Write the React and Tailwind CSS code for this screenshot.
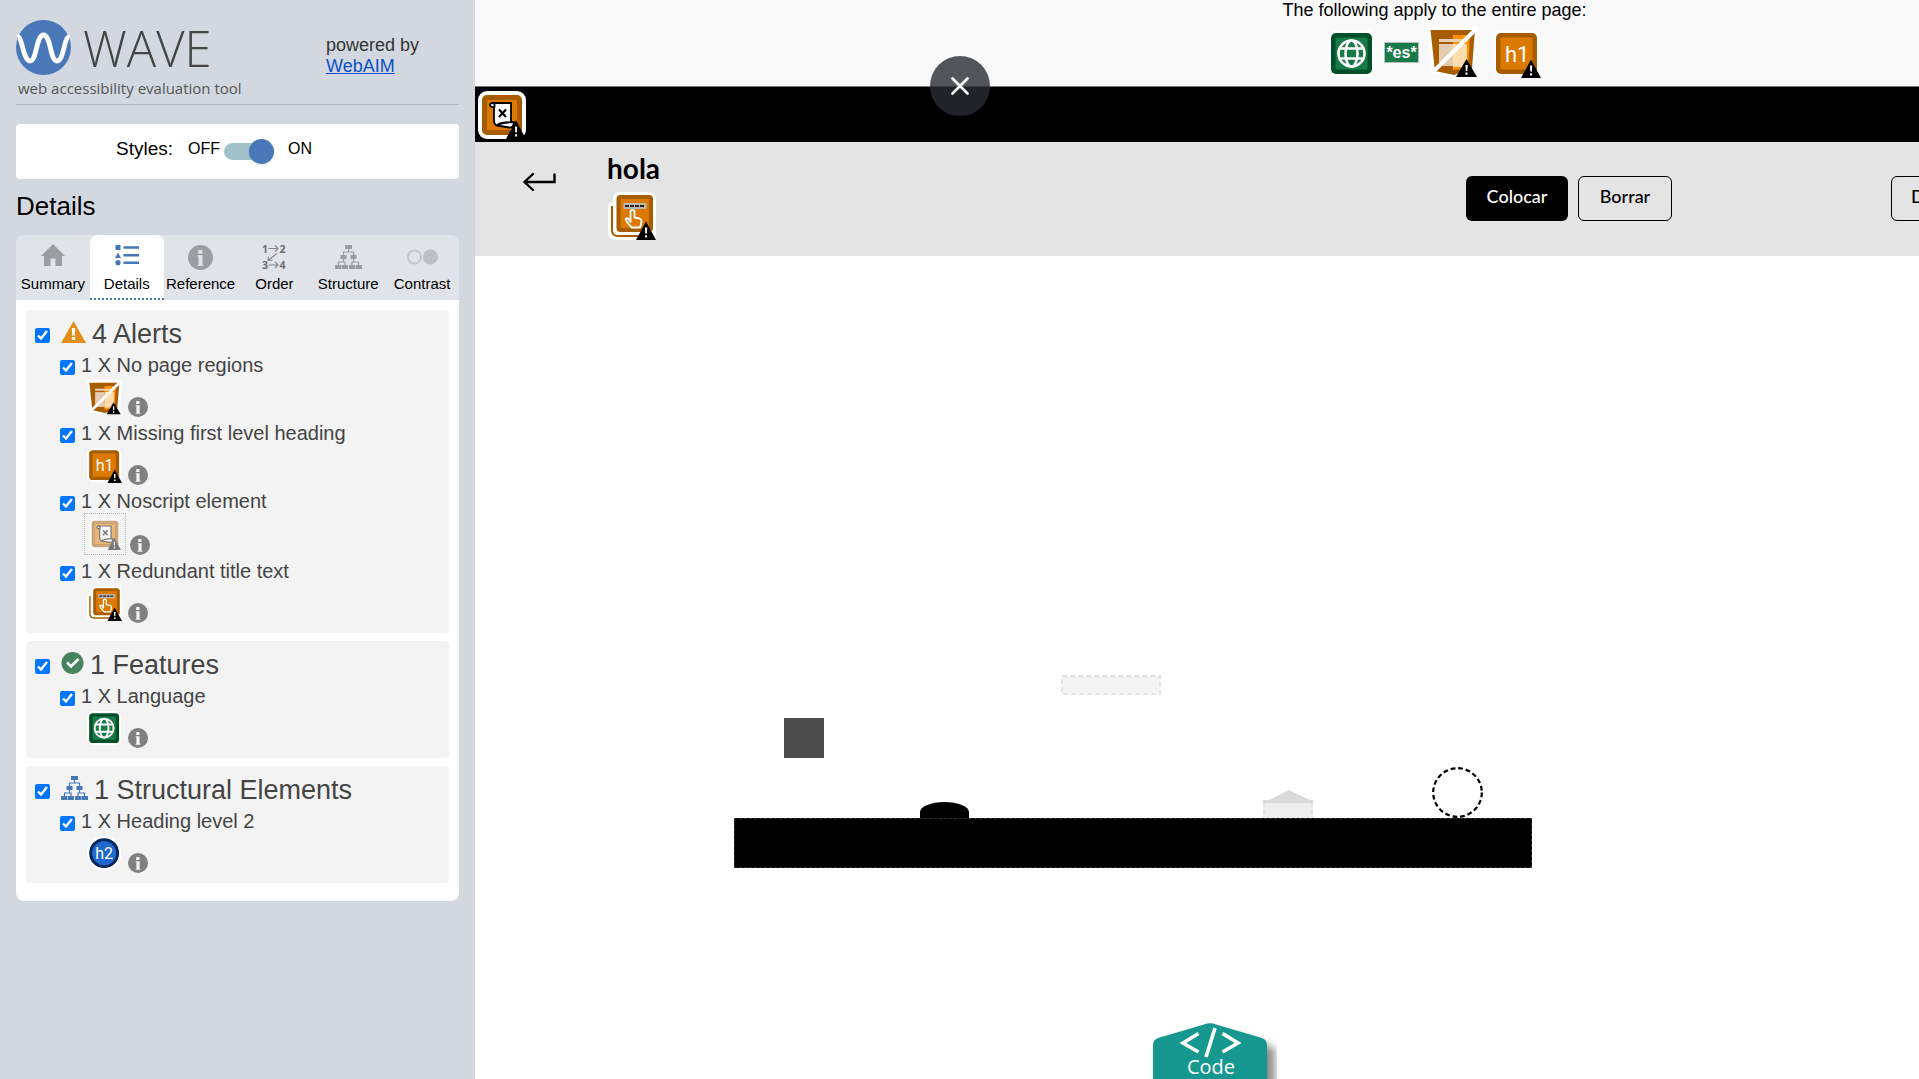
import React from "react";

const ARIAL = "font-['Liberation_Sans',Arial,sans-serif]";

function Warn() {
  return (
    <g>
      <path d="M38 29.500 L48 48 H28 Z" fill="#000" />
      <path d="M37 35.500h2.200l-.3 6h-1.600z M37.100 43.200h2v2.200h-2z" fill="#fff" />
    </g>
  );
}

function Plate({ dark, fill }) {
  return (
    <g>
      <rect width="47" height="47" rx="8" fill="#fff" />
      <rect x="3" y="3" width="41" height="41" rx="5" fill={dark} />
      <rect x="7.500" y="7.500" width="32" height="32" rx="1" fill={fill} />
    </g>
  );
}

function GlobeIcon({ className }) {
  return (
    <svg viewBox="0 0 48 48" className={className} role="img" aria-label="Language">
      <Plate dark="#004f28" fill="#187a48" />
      <g fill="none" stroke="#fff" strokeWidth="2.600">
        <circle cx="23.500" cy="23.500" r="13" />
        <ellipse cx="23.500" cy="23.500" rx="6" ry="13" />
        <path d="M12.500 18.500h22M12.500 28.500h22" />
      </g>
    </svg>
  );
}

function H1Icon({ className }) {
  return (
    <svg viewBox="0 0 48 48" className={className} role="img" aria-label="Missing first level heading">
      <Plate dark="#a75c00" fill="#dc7a00" />
      <text x="12" y="32" fontSize="22" fill="#fff" fontFamily="Roboto, sans-serif">h1</text>
      <Warn />
    </svg>
  );
}

function H2Icon({ className }) {
  return (
    <svg viewBox="0 0 48 48" className={className} role="img" aria-label="Heading level 2">
      <circle cx="23.500" cy="23.500" r="23.500" fill="#fff" />
      <circle cx="23.500" cy="23.500" r="20.500" fill="#00265c" />
      <circle cx="23.500" cy="23.500" r="16.500" fill="#2068cc" />
      <text x="23.500" y="31" fontSize="22" textAnchor="middle" fill="#fff" fontFamily="Roboto, sans-serif">h2</text>
    </svg>
  );
}

function NoRegionIcon({ className }) {
  return (
    <svg viewBox="0 0 52 52" className={className} role="img" aria-label="No page regions">
      <path d="M0 0H52L49 46 27 52 5 48Z" fill="#fff" />
      <path d="M3.500 4H48L45 42 27 49 8 45Z" fill="#a75c00" />
      <path d="M26 9H43L41 43 26 44Z" fill="#ff8f00" />
      <path d="M12 13H40V16H12Z" fill="#e8d0ae" />
      <path d="M12 18H26V40H12Z" fill="#e3ccb0" />
      <path d="M26 18H40V41H26Z" fill="#ffdcb0" />
      <path d="M7 45L48 4" stroke="#fff" strokeWidth="4" />
      <path d="M39.500 33L50 51H29Z" fill="#000" />
      <path d="M38.500 39h2.200l-.3 6h-1.600z M38.500 46.500h2v2.200h-2z" fill="#fff" />
    </svg>
  );
}

function NoscriptIcon({ className }) {
  return (
    <svg viewBox="0 0 48 48" className={className} role="img" aria-label="Noscript element">
      <rect width="48" height="48" rx="9" fill="#fff" />
      <rect x="4" y="4" width="40" height="40" rx="5" fill="#a75c00" />
      <rect x="9" y="9" width="30" height="30" rx="1" fill="#dc7a00" />
      <g stroke="#000" strokeWidth="1.800" strokeLinejoin="round">
        <path d="M14 12H33V31c0 3-2 4.500-2 4.500L18 34c-2-1-2-4-2-4V14c0-1.500-1-2-2-2Z" fill="#fff" />
        <path d="M16.500 16.500V13.500c0-1.800-4.500-2-4.500.2 0 2.500 3 2.800 4.500 1.800" fill="#fff" />
        <path d="M19 34.500c2-2.500 6-3 17-3.500 0 4-2 6-5 5.500Z" fill="#fff" />
        <path d="M21 18.500l7 7.500M28 18.500l-7 7.500" fill="none" strokeWidth="2.200" />
      </g>
      <Warn />
    </svg>
  );
}

function RedundantIcon({ className }) {
  return (
    <svg viewBox="0 0 48 48" className={className} role="img" aria-label="Redundant title text">
      <path d="M12 0H40q8 0 8 7V41q0 7-7 7H8q-8 0-8-7V16q0-6 5-6V7q0-7 7-7Z" fill="#fff" />
      <path d="M4 14V38q0 6 6 6H40" fill="none" stroke="#a75c00" strokeWidth="2" />
      <rect x="8.500" y="3" width="36.500" height="37" rx="4" fill="#a75c00" />
      <rect x="12.500" y="7" width="28.500" height="29" fill="#dc7a00" />
      <rect x="15.500" y="11" width="23" height="6" fill="#bdb6ad" />
      <path d="M17 14H37" stroke="#222" strokeWidth="1.800" strokeDasharray="4 1" />
      <path d="M22.500 30V20q0-2 2-2t2 2V25.500l5 1q2 .5 2 2.500-.3 4-1.500 6.500h-8.500c-2-3-5-5-6-8.500 1.500-1.500 3.500-.5 5 3Z" fill="none" stroke="#fff" strokeWidth="1.800" strokeLinejoin="round" />
      <Warn />
    </svg>
  );
}

function InfoIcon({ className, light }) {
  return (
    <svg viewBox="0 0 20 20" className={className} aria-hidden="true">
      <circle cx="10" cy="10" r="10" fill="currentColor" />
      <g fill={light}>
        <rect x="8.200" y="4" width="3.300" height="3" />
        <path d="M7.600 8.200h4v7.600h.8v.9H7.600v-.9h.8V9.200h-.8z" />
      </g>
    </svg>
  );
}

function TreeIcon({ className }) {
  return (
    <svg viewBox="0 0 27 24" className={className} fill="currentColor" aria-hidden="true">
      <path d="M10 0h7v4h-7zM5.500 10h6v4h-6zM15.500 10h6v4h-6zM0 20h6.500v4H0zM7 20h6v4H7zM14 20h6v4h-6zM20.500 20H27v4h-6.500z" />
      <path d="M13.500 4v3M8.500 10V7h10v3M8.500 14v3M18.500 14v3M3.500 20v-3H10v3M17 20v-3h6.500v3" fill="none" stroke="currentColor" strokeWidth="1.200" />
    </svg>
  );
}

function OrderIcon({ className }) {
  return (
    <svg viewBox="-4 -5 32 36" className={className} aria-hidden="true">
      <g fontFamily="'Open Sans', sans-serif" fontWeight="700" fontSize="10.500" fill="#6c6f72">
        <text x="0" y="8.500">1</text>
        <text x="17.500" y="8.500">2</text>
        <text x="0" y="25">3</text>
        <text x="17.500" y="25">4</text>
      </g>
      <g fill="none" stroke="#84888b" strokeWidth="1.100">
        <path d="M6.500 4.500h9.500M13 1.500l3 3-3 3M6.500 21h9.500M13 18l3 3-3 3M15 9.500L6 16.500M6.500 12.500L6 16.500l4.500-.2" />
      </g>
    </svg>
  );
}

const TABS = [
  {
    name: "Summary",
    icon: (
      <svg viewBox="0 0 24 22" className="mb-1 h-[22px] w-[24px]" aria-hidden="true">
        <path d="M12 0L24 12H21V22H14.500V14.500H9.500V22H3V12H0Z" fill="#9a9ea1" />
      </svg>
    ),
  },
  {
    name: "Details",
    icon: (
      <svg viewBox="0 0 24 22" className="mb-1 h-[22px] w-[24px]" fill="#4678b8" aria-hidden="true">
        <path d="M.5 1h5v5h-5zM3 8.500l3 5.500H0zM8.500 2.200H24v2.500H8.500zM8.500 10H24v2.500H8.500zM8.500 17.500H24V20H8.500z" />
        <circle cx="3" cy="18.700" r="2.600" />
      </svg>
    ),
  },
  { name: "Reference", icon: <InfoIcon className="size-[25px] text-[#9a9ea1]" light="#e0e3e8" /> },
  { name: "Order", icon: <OrderIcon className="h-[36px] w-[32px]" /> },
  { name: "Structure", icon: <TreeIcon className="h-[24px] w-[27px] text-[#9a9ea1]" /> },
  {
    name: "Contrast",
    icon: (
      <svg viewBox="0 0 31 16" className="h-[16px] w-[31px]" aria-hidden="true">
        <circle cx="7.500" cy="8" r="6.500" fill="none" stroke="#c4c7ca" strokeWidth="2" />
        <circle cx="23.500" cy="8" r="7.500" fill="#bcc0c4" />
      </svg>
    ),
  },
];

const GROUPS = [
  {
    title: "4 Alerts",
    icon: (
      <svg viewBox="0 0 25 22" className="h-[22px] w-[25px]" aria-hidden="true">
        <path d="M12.500 0L25 22H0Z" fill="#e28e1b" />
        <path d="M10.800 7h3.400l-.4 7.500h-2.600zM10.900 16h3.200v3h-3.200z" fill="#fff" />
      </svg>
    ),
    items: [
      { label: "1 X No page regions", Icon: NoRegionIcon },
      { label: "1 X Missing first level heading", Icon: H1Icon },
      { label: "1 X Noscript element", Icon: NoscriptIcon, hidden: true },
      { label: "1 X Redundant title text", Icon: RedundantIcon },
    ],
  },
  {
    title: "1 Features",
    icon: (
      <svg viewBox="0 0 23 22" className="h-[22px] w-[23px]" aria-hidden="true">
        <circle cx="11.500" cy="11" r="11" fill="#46845f" />
        <path d="M6 10.500l4 4 7.500-7.500" fill="none" stroke="#fff" strokeWidth="2.600" />
      </svg>
    ),
    items: [{ label: "1 X Language", Icon: GlobeIcon }],
  },
  {
    title: "1 Structural Elements",
    icon: <TreeIcon className="h-[24px] w-[27px] text-[#4678b8]" />,
    items: [{ label: "1 X Heading level 2", Icon: H2Icon }],
  },
];

function Item({ label, Icon, hidden }) {
  return (
    <li>
      <label className="flex h-7 items-center gap-1.5 pt-1 pl-[34px] text-[20px] leading-6">
        <input type="checkbox" defaultChecked className="mt-1 size-[15px]" />
        {label}
      </label>
      <div className={hidden ? "flex h-[42px] items-end gap-1 pl-[58px]" : "flex h-10 items-end gap-1.5 pl-[61px]"}>
        {hidden ? (
          <button className="flex size-[42px] items-center justify-center border border-dotted border-[#b5b5b5]">
            <Icon className="size-8 opacity-50" />
          </button>
        ) : (
          <button className="mb-0.5">
            <Icon className="size-[35px]" />
          </button>
        )}
        <button aria-label="Info" className="text-[#808080]">
          <InfoIcon className="size-5" light="#f3f3f3" />
        </button>
      </div>
    </li>
  );
}

function Sidebar() {
  return (
    <aside className="w-[475px] shrink-0 bg-[#d3d8e0] px-4 pt-[19px]">
      <header className="flex h-[86px] justify-between border-b border-[#b3b8b8]">
        <div className="font-['Open_Sans',sans-serif] text-[#444]">
          <div className="flex items-center gap-3">
            <svg viewBox="0 0 55 55" className="size-[55px]" role="img" aria-label="WAVE logo">
              <circle cx="27.500" cy="27.500" r="27.500" fill="#4878b8" />
              <path d="M1.500 17C6 15 7 41 14 41S20 15 27.500 15 34 41 41 41 48 16 53.500 17" fill="none" stroke="#fff" strokeWidth="4.800" />
            </svg>
            <span className="pt-0.5 text-[49px] leading-[55px] font-light">WAVE</span>
          </div>
          <p className="ml-0.5 text-[15px] leading-6 text-[#555]">web accessibility evaluation tool</p>
        </div>
        <p className="mt-4 w-[133px] text-[18px] leading-[21px] text-[#333]">
          powered by
          <br />
          <a href="#webaim" className="text-[#0a50c8] underline">WebAIM</a>
        </p>
      </header>

      <section className="mt-[19px] flex h-[55px] items-center rounded bg-white pl-[100px] text-black">
        <span className="pb-1 text-[19px]">Styles:</span>
        <label className="ml-[15px] flex items-center text-[16px]">
          <span className="pb-1.5">OFF</span>
          <input type="checkbox" role="switch" defaultChecked aria-label="Styles" className="peer sr-only" />
          <span className="ml-1 flex h-[17px] w-[50px] items-center justify-end rounded-full bg-[#a0c0ca]">
            <span className="size-[25px] rounded-full bg-[#4878b8] shadow" />
          </span>
          <span className="ml-3.5 pb-1.5">ON</span>
        </label>
      </section>

      <h1 className="mt-[10px] h-[46px] text-[26px] leading-[34px]">Details</h1>

      <nav className="grid grid-cols-6 overflow-hidden rounded-t-lg bg-[#e0e3e8]">
        {TABS.map((tab, i) => (
          <button
            key={tab.name}
            className={
              i === 1
                ? "flex h-[65px] flex-col items-center rounded-t-lg border-b-2 border-dotted border-[#4678b8] bg-white text-[15px]"
                : "flex h-[65px] flex-col items-center text-[15px]"
            }
          >
            <span className="flex h-[40px] items-center justify-center pt-1">{tab.icon}</span>
            <span className="leading-[18px]">{tab.name}</span>
          </button>
        ))}
      </nav>

      <div className="flex flex-col gap-2 rounded-b-lg bg-white px-2.5 pt-2.5 pb-[18px]">
        {GROUPS.map((g) => (
          <section key={g.title} className="rounded bg-[#f3f3f3] pt-2 pb-2.5 text-[#444]">
            <label className="flex h-[31px] items-center gap-1.5 pl-[9px] text-[27px]">
              <input type="checkbox" defaultChecked className="mt-1 mr-[5px] size-[15px]" />
              <span className="-mt-1">{g.icon}</span>
              <h2 className="pt-0.5 leading-[31px]">{g.title}</h2>
            </label>
            <ul>
              {g.items.map((item) => (
                <Item key={item.label} {...item} />
              ))}
            </ul>
          </section>
        ))}
      </div>
    </aside>
  );
}

function Canvas() {
  return (
    <div className="relative flex-1">
      <div className="absolute top-[462px] left-[309px] size-10 bg-[#4b4b4b]" />
      <svg className="absolute top-[419px] left-[586px] h-5 w-[100px]" viewBox="0 0 100 20" aria-hidden="true">
        <rect x="1" y="1" width="98" height="18" fill="#f4f4f4" stroke="#e2e2e2" strokeWidth="2" strokeDasharray="5 3" />
      </svg>
      <div className="absolute top-[546px] left-[445px] h-5 w-[49px] rounded-t-[50%] bg-black" />
      <div className="absolute top-[562px] left-[259px] h-[50px] w-[798px] border border-dashed border-[#333] bg-black" />
      <svg className="absolute top-[534px] left-[788px] h-[28px] w-[52px]" viewBox="0 0 52 28" aria-hidden="true">
        <path d="M0 11h50v17H0z" fill="#ededed" />
        <path d="M1 13V28M49 13V28" stroke="#dcdcdc" strokeWidth="1.500" strokeDasharray="4 3" />
        <path d="M26 0L47 10h3v3H0v-3h6z" fill="#d9d9d9" />
      </svg>
      <svg className="absolute top-[511px] left-[957px] size-[51px]" viewBox="0 0 51 51" aria-hidden="true">
        <circle cx="25.500" cy="25.500" r="24.300" fill="#fff" stroke="#000" strokeWidth="2.200" strokeDasharray="4.800 2.830" />
      </svg>
    </div>
  );
}

function Page() {
  return (
    <main className="relative min-w-0 flex-1 overflow-hidden bg-white">
      <div className="flex min-h-full w-screen flex-col">
        <header className="flex h-[87px] flex-col items-center border-b border-[#777] bg-[#f9f9f9] text-black">
          <p className="text-[18px] leading-[20px]">The following apply to the entire page:</p>
          <div className="flex items-center gap-2 pt-1.5">
            <GlobeIcon className="mt-1 size-12" />
            <span className="border border-[#bbb] bg-[#177a48] px-px text-[16px] leading-[19px] font-bold text-white">*es*</span>
            <NoRegionIcon className="size-[52px]" />
            <H1Icon className="mt-1 ml-1.5 size-12" />
          </div>
        </header>
        <div className="flex h-[55px] items-center bg-black pl-[3px]">
          <NoscriptIcon className="size-12" />
        </div>
        <div className="flex h-[114px] bg-[#e4e4e4] font-['Lato',sans-serif] text-black">
          <button aria-label="Volver" className="mt-[31px] ml-12 h-[18px]">
            <svg viewBox="0 0 33 18" className="h-[18px] w-[33px]" fill="none" stroke="#000" strokeWidth="2.400" aria-hidden="true">
              <path d="M31.500 1.500V9H2M10 1L1.500 9l8.500 8" strokeLinecap="round" />
            </svg>
          </button>
          <div className="mt-3 ml-[51px] w-[859px]">
            <h2 className="h-[38px] text-[28px] leading-[29px] font-bold">hola</h2>
            <RedundantIcon className="ml-px size-12" />
          </div>
          <div className="flex gap-2.5 pt-[34px] text-[18px] font-medium">
            <button className="h-[45px] w-[102px] rounded-md bg-black pb-1 text-white">Colocar</button>
            <button className="h-[45px] w-[94px] rounded-md border border-black pb-1">Borrar</button>
          </div>
          <button className="mt-[34px] ml-[219px] h-[45px] w-[110px] rounded-md border border-black pb-1 pl-[19px] text-left text-[18px] font-medium">D</button>
        </div>
        <Canvas />
      </div>

      <button className="absolute bottom-0 left-[678px] h-[56px] w-[124px] overflow-hidden text-white">
        <svg viewBox="0 0 124 56" className="absolute inset-0" aria-hidden="true">
          <defs>
            <filter id="soft" x="-20%" y="-20%" width="150%" height="150%">
              <feDropShadow dx="8" dy="8" stdDeviation="4" floodColor="#000" floodOpacity=".45" />
            </filter>
          </defs>
          <path d="M0 70V22Q0 17 5 15L51 1.500Q57-1 63 1.500L109 15Q114 17 114 22V70Z" fill="#189790" filter="url(#soft)" />
          <path d="M45.500 10.500L30 20l15.500 9M69.500 10.500L85 20l-15.500 9M62 5L53 34" fill="none" stroke="#fff" strokeWidth="3.600" />
        </svg>
        <span className="relative block w-[116px] pt-8 text-center font-['Open_Sans',sans-serif] text-[20px] leading-[24px]">Code</span>
      </button>
    </main>
  );
}

export default function App() {
  return (
    <div className={`relative flex h-screen overflow-hidden ${ARIAL}`}>
      <Sidebar />
      <Page />
      <button
        aria-label="Cerrar"
        className="absolute top-14 left-1/2 flex size-[60px] -translate-x-1/2 items-center justify-center rounded-full bg-[#282c32]/80"
      >
        <svg viewBox="0 0 18 18" className="size-[18px]" aria-hidden="true">
          <path d="M1.500 1.500l15 15M16.500 1.500l-15 15" stroke="#fff" strokeWidth="2.600" strokeLinecap="round" />
        </svg>
      </button>
    </div>
  );
}
